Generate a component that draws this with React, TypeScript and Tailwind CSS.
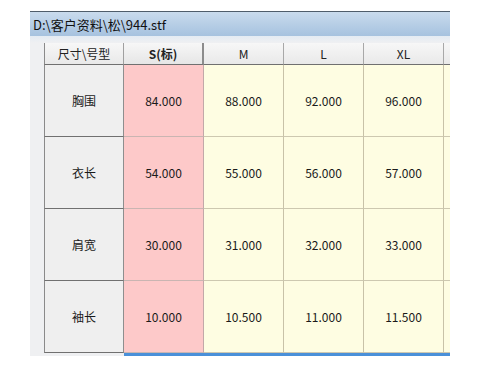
import React from "react"

const sizes = ["M", "L", "XL"]

const rows = [
  { label: "胸围", values: ["84.000", "88.000", "92.000", "96.000"] },
  { label: "衣长", values: ["54.000", "55.000", "56.000", "57.000"] },
  { label: "肩宽", values: ["30.000", "31.000", "32.000", "33.000"] },
  { label: "袖长", values: ["10.000", "10.500", "11.000", "11.500"] },
]

const font = { fontFamily: '"Noto Sans CJK SC", "Noto Sans", sans-serif' }

export default function App() {
  return (
    <div className="w-[480px] h-[367px] bg-white overflow-hidden" style={font}>
      <div className="ml-[30px] mt-[11px] w-[420px] flex flex-col">
        {/* title bar */}
        <div className="h-[25px] border-t border-[#4f5d6b] bg-gradient-to-b from-[#c9dbed] to-[#a6c2df] flex items-center pl-[3px] text-[13px] text-[#111] leading-none">
          D:\客户资料\松\944.stf
        </div>

        <div className="bg-gradient-to-b from-[#e4ebf3] to-[#eff0f2] h-[7px]" />

        <div className="bg-[#eff0f2] pl-[14px] flex">
          <div className="flex flex-col">
            {/* header row */}
            <div className="flex h-[22px] text-[12px] text-[#222]">
              <div className="w-[80px] border-l border-[#8a8a8a] border-b border-b-[#707070] border-r border-r-[#a0a0a0] bg-gradient-to-b from-[#f7f7f7] to-[#e9e9e9] flex items-center justify-center">
                尺寸\号型
              </div>
              <div className="w-[80px] border-b border-b-[#707070] border-r-2 border-r-[#8c8c8c] bg-gradient-to-b from-[#f7f7f7] to-[#e6e6e6] flex items-center justify-center font-bold">
                S(标)
              </div>
              {sizes.map((s) => (
                <div
                  key={s}
                  className="w-[80px] border-b border-b-[#707070] border-r border-r-[#a8a8a8] bg-gradient-to-b from-[#f7f7f7] to-[#e9e9e9] flex items-center justify-center"
                >
                  {s}
                </div>
              ))}
              <div className="w-[6px] border-b border-b-[#707070] bg-gradient-to-b from-[#f7f7f7] to-[#e9e9e9]" />
            </div>

            {/* data rows */}
            {rows.map((r) => (
              <div key={r.label} className="flex h-[72px] text-[12px] text-[#1a1a1a]">
                <div className="w-[80px] border-l border-[#8a8a8a] border-r border-r-[#8e8e8e] border-b border-b-[#707070] bg-[#efefef] flex items-center justify-center">
                  {r.label}
                </div>
                <div className="w-[80px] border-r border-r-[#c2a8a8] border-b border-b-[#c9b5b2] bg-[#fdc9c9] flex items-center justify-center">
                  {r.values[0]}
                </div>
                {r.values.slice(1).map((v, i) => (
                  <div
                    key={i}
                    className="w-[80px] border-r border-r-[#c8c2a8] border-b border-b-[#cdc8b0] bg-[#fefde2] flex items-center justify-center"
                  >
                    {v}
                  </div>
                ))}
                <div className="w-[6px] border-b border-b-[#cdc8b0] bg-[#fefde2]" />
              </div>
            ))}

            {/* bottom strip */}
            <div className="flex h-[3px]">
              <div className="w-[80px]" />
              <div className="w-[326px] bg-[#4a90d9]" />
            </div>
          </div>
        </div>
      </div>
    </div>
  )
}
